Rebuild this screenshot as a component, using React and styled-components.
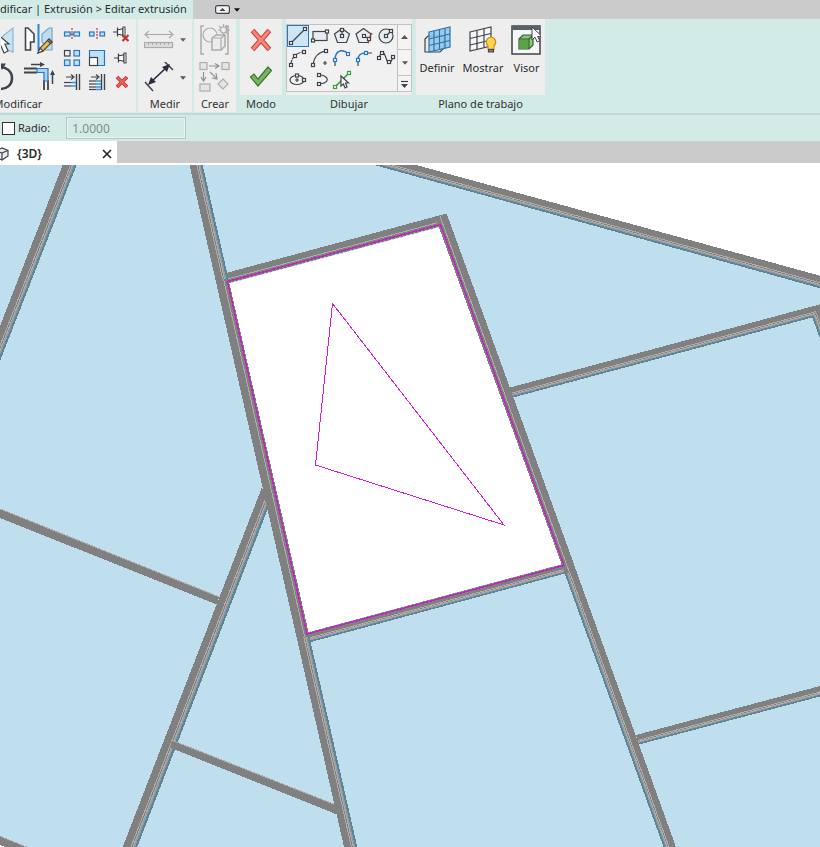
import React, { useState } from 'react';
import styled, { createGlobalStyle } from 'styled-components';

const GlobalStyle = createGlobalStyle`
  * {
    box-sizing: border-box;
  }

  body {
    margin: 0;
    background: #ffffff;
    color: #2b2b2b;
    font-family: 'Noto Sans', 'Open Sans', sans-serif;
    font-size: 11px;
    line-height: 16px;
  }

  button,
  input {
    font: inherit;
    color: inherit;
  }
`;

const Window = styled.div`
  display: flex;
  flex-direction: column;
  height: 100vh;
  min-height: 400px;
  overflow: hidden;
`;

const TitleBar = styled.header`
  display: flex;
  align-items: stretch;
  height: 19px;
  background: #cbcbcb;
`;

const ContextTab = styled.button`
  display: flex;
  align-items: center;
  padding: 0 6px 2px 0;
  border: none;
  background: #d3ebe7;
  white-space: nowrap;
`;

const CollapseButton = styled.button`
  display: flex;
  align-items: center;
  gap: 4px;
  margin-left: 22px;
  padding: 0;
  border: none;
  background: none;
`;

const Ribbon = styled.div`
  display: flex;
  align-items: stretch;
  gap: 2px;
  height: 96px;
  padding-bottom: 1px;
  overflow: hidden;
  background: #d3ebe7;
  border-bottom: 2px solid #c3d8d5;
`;

const Panel = styled.section`
  display: flex;
  flex: none;
  flex-direction: column;
  width: ${props => props.$width}px;
  margin-left: ${props => props.$start || 0}px;
  background: ${props => props.$contextual ? '#d3ebe7' : '#eeeeee'};
`;

const PanelBody = styled.div`
  display: flex;
  flex: 1;
  align-items: flex-start;
  justify-content: ${props => props.$justify || 'center'};
  gap: ${props => props.$gap || 0}px;
  padding-top: 5px;
  background: #eeeeee;
`;

const PanelTitle = styled.div`
  height: 17px;
  line-height: 18px;
  text-align: center;
  color: #333333;
`;

const ToolColumn = styled.div`
  display: flex;
  flex-direction: column;
  gap: 6px;
`;

const SmallTools = styled.div`
  display: grid;
  grid-template-columns: repeat(3, 25px);
  grid-auto-rows: 24px;
  justify-items: center;
  margin: -2px 2px 0 0;
`;

const ToolButton = styled.button`
  display: flex;
  align-items: center;
  justify-content: center;
  gap: 6px;
  height: ${props => props.$height || 32}px;
  padding: 0;
  border: none;
  background: none;

  svg {
    display: block;
    flex: none;
  }

  &:disabled {
    opacity: 0.9;
  }
`;

const LabelledTool = styled.button`
  display: flex;
  flex-direction: column;
  align-items: center;
  gap: 4px;
  padding: 0;
  border: none;
  background: none;
`;

const Gallery = styled.div`
  display: flex;
  border: 1px solid #c2c2c2;
  background: #f1f1f1;
`;

const GalleryGrid = styled.div`
  display: grid;
  grid-template-columns: repeat(5, 22px);
  grid-auto-rows: 22px;
`;

const GalleryItem = styled.button`
  display: flex;
  align-items: center;
  justify-content: center;
  padding: 0;
  border: 1px solid ${props => props.$active ? '#2a78c2' : 'transparent'};
  background: ${props => props.$active ? '#cde6f7' : 'none'};
`;

const GalleryScroll = styled.div`
  display: grid;
  grid-template-rows: 25px 26px 15px;
  width: 14px;
  border-left: 1px solid #c2c2c2;
`;

const ScrollButton = styled.button`
  display: flex;
  align-items: center;
  justify-content: center;
  padding: 0;
  border: none;
  border-bottom: 1px solid #c2c2c2;
  background: #f4f4f4;

  &:last-child {
    border-bottom: none;
  }
`;

const OptionsBar = styled.div`
  display: flex;
  align-items: center;
  height: 26px;
  padding: 0 2px;
  background: #d3ebe7;
`;

const OptionLabel = styled.label`
  display: flex;
  align-items: center;
  gap: 3px;
`;

const CheckBox = styled.input`
  appearance: none;
  width: 13px;
  height: 13px;
  margin: 0;
  border: 1px solid #333333;
  background: #ffffff;

  &:checked {
    background: #2a78c2;
  }
`;

const RadiusInput = styled.input`
  width: 120px;
  height: 22px;
  margin-left: 16px;
  padding: 0 4px;
  border: 2px solid #e8f2f1;
  outline: 1px solid #b5c6c4;
  outline-offset: -1px;
  background: #d3ebe7;
  color: #838b8a;
  font-size: 12px;
`;

const ViewTabs = styled.nav`
  display: flex;
  height: 22px;
  background: #cbcbcb;
`;

const ViewTab = styled.div`
  display: flex;
  align-items: center;
  justify-content: space-between;
  width: 117px;
  padding: 3px 5px 0 0;
  background: #ffffff;
`;

const ViewName = styled.button`
  display: flex;
  align-items: center;
  gap: 7px;
  padding: 0;
  border: none;
  background: none;
  font-size: 12px;
  font-weight: 600;
`;

const CloseButton = styled.button`
  display: flex;
  padding: 0;
  border: none;
  background: none;
`;

const Viewport = styled.main`
  display: flex;
  flex: 1;
  min-height: 0;
  padding-top: 2px;
  background: #ffffff;

  svg {
    display: block;
    width: 100%;
    height: 100%;
  }
`;

const INK = '#3f434b';
const BLUE = '#2877be';
const SKY = '#bfe0f5';

const Icon = ({ w = 20, h = w, children }) => (
  <svg width={w} height={h} viewBox={`0 0 ${w} ${h}`} fill="none" stroke={INK} strokeWidth="1.2" aria-hidden="true">
    {children}
  </svg>
);

// little square grips drawn on the ends of the sketch tools
const Grips = ({ at, color = INK }) => at.map(([x, y]) => (
  <rect key={`${x}-${y}`} x={x - 1.5} y={y - 1.5} width="3" height="3" fill="#fff" stroke={color} />
));

const Caret = ({ up, color = '#555' }) => (
  <svg width={up ? 7 : 6} height="4" viewBox="0 0 7 4" aria-hidden="true">
    <path d={up ? 'M0 4L3.5 0L7 4Z' : 'M0 0L3.5 4L7 0Z'} fill={color} />
  </svg>
);

const PointerShape = ({ x, y }) => (
  <path
    transform={`translate(${x} ${y})`}
    d="M0 0V13L3 10.2L5.2 15L7.8 13.8L5.6 9.4H10Z"
    fill="#fff"
    stroke="#3f434b"
    strokeWidth="1"
  />
);

const SelectIcon = () => (
  <Icon w={20} h={32}>
    <path d="M2 12L12 4V28L2 24Z" fill="#c9e4f4" stroke="#8fb6d0" />
    <path d="M-4 10V24L0 22L3 29L7 27L4 20H8Z" fill="#fff" />
  </Icon>
);

const RotateIcon = () => (
  <Icon w={20} h={32}>
    <path d="M-1 5C5 5 11 9 11 16C11 23 6 27 -1 27" strokeWidth="2.600" />
    <path d="M-2 1.500H5L1 8Z" fill={INK} stroke="none" />
  </Icon>
);

const MirrorIcon = () => (
  <Icon w={32} h={32}>
    <path d="M1.500 4H4L10 10V18H6.500V26H1.500Z" fill="#fff" strokeWidth="1.600" />
    <path d="M28 4H25L18 10V18L21 21V26H28Z" fill="#bcdcf0" stroke="#79a6c8" />
    <path d="M14.500 0V27" stroke="#2c86d6" strokeWidth="2" />
    <path d="M14 29L16 24L25 15L28 18L19 27Z" fill="#f2bd4a" stroke="#5b4a36" />
    <path d="M25 15L28 18L26.500 19.500L23.500 16.500Z" fill="#e77c74" />
    <path d="M14 29L16 24L19 27Z" fill="#fff" />
  </Icon>
);

const CornerIcon = () => (
  <Icon w={32} h={32}>
    <path d="M7 2.500H18" strokeWidth="1.5" />
    <path d="M16 0L21 2.500L16 5Z" fill={INK} stroke="none" />
    <path d="M0 6.500H13M0 10.500H13M20 18V28M24 18V28" strokeWidth="1.8" />
    <path d="M13 6.500H24V19H20V10.500H13Z" fill="#a8d4f3" stroke={BLUE} />
    <path d="M28.500 22V11" strokeWidth="1.5" />
    <path d="M26 13L28.500 8L31 13Z" fill={INK} stroke="none" />
  </Icon>
);

const SplitIcon = () => (
  <Icon w={18} h={18}>
    <rect x="1.500" y="7" width="5.500" height="4" fill={SKY} stroke={BLUE} />
    <rect x="11" y="7" width="5.500" height="4" fill={SKY} stroke={BLUE} />
    <path d="M7 9H11" stroke={BLUE} />
    <path d="M9 3V15" stroke="#c03b36" strokeDasharray="2 1" />
  </Icon>
);

const SplitGapIcon = () => (
  <Icon w={18} h={18}>
    <rect x="1.500" y="7" width="4.500" height="4" fill={SKY} stroke={BLUE} />
    <rect x="12" y="7" width="4.500" height="4" fill={SKY} stroke={BLUE} />
    <path d="M9 3V15" stroke="#c03b36" strokeDasharray="2 1" />
  </Icon>
);

const PinPath = () => (
  <g>
    <path d="M1 9H5M5.500 4.500V13.500" />
    <path d="M5.500 6.500H8L11 5.500V12.500L8 11.500H5.500Z" fill="#f7f7f7" />
    <rect x="11" y="4" width="2" height="10" fill="#fff" strokeWidth="1" />
  </g>
);

const UnpinIcon = () => (
  <Icon w={18} h={18}>
    <g transform="translate(-1 -2)"><PinPath /></g>
    <path d="M9.500 10L15.500 16M15.500 10L9.500 16" stroke="#c0342f" strokeWidth="2.2" />
  </Icon>
);

const PinIcon = () => (
  <Icon w={18} h={18}>
    <PinPath />
  </Icon>
);

const ArrayIcon = () => (
  <Icon w={18} h={18}>
    <rect x="1.500" y="1.500" width="5.500" height="5.500" fill="#e6f1f8" />
    <rect x="11" y="1.500" width="5.500" height="5.500" fill={SKY} stroke={BLUE} />
    <rect x="1.500" y="11" width="5.500" height="5.500" fill={SKY} stroke={BLUE} />
    <rect x="11" y="11" width="5.500" height="5.500" fill={SKY} stroke={BLUE} />
  </Icon>
);

const ScaleIcon = () => (
  <Icon w={18} h={18}>
    <path d="M1.500 8V1.500H16.500V16.500H10" fill={SKY} stroke={BLUE} />
    <rect x="1.500" y="8.500" width="8" height="8" fill="#fff" />
  </Icon>
);

const TrimIcon = ({ multiple }) => (
  <Icon w={18} h={18}>
    <path d="M3 4H10M8 1.500L11 4L8 6.500" />
    <path d="M13.500 1V17M16.500 1V17" strokeWidth="1.4" />
    {(multiple ? [8, 11, 14, 16.5] : [9.5, 13]).map(y => (
      <g key={y}>
        <path d={`M1 ${y}H8`} />
        <path d={`M8 ${y}H13`} stroke="#3c93dc" strokeWidth="1.500" />
      </g>
    ))}
  </Icon>
);

const DeleteIcon = () => (
  <Icon w={18} h={18}>
    <path d="M4 4L14 14M14 4L4 14" stroke="#bf302d" strokeWidth="3.600" />
    <path d="M4.500 4.500L13.500 13.500M13.500 4.500L4.500 13.500" stroke="#f0605a" strokeWidth="2" />
  </Icon>
);

const MeasureIcon = () => (
  <Icon w={30} h={32}>
    <g stroke="#a3a3a3">
      <path d="M2 10.500H28M5 7L1 10.500L5 14M25 7L29 10.500L25 14" />
      <rect x="0.500" y="18.500" width="28" height="5" fill="#ddd" />
      <path d="M4.500 18V21M8.500 18V21M12.500 18V21M16.500 18V21M20.500 18V21M24.500 18V21" />
    </g>
  </Icon>
);

const DimensionIcon = () => (
  <Icon w={30} h={32}>
    <path d="M6 21L24 4" stroke="#2b2d3e" strokeWidth="1.600" />
    <path d="M1 20L9 29M20 -1L29 8" strokeWidth="1.500" />
    <path d="M4 23L7 15L12 20ZM26 2L18 5L23 10Z" fill="#2b2d3e" stroke="none" />
  </Icon>
);

const ComponentIcon = () => (
  <Icon w={32} h={32}>
    <g stroke="#a5a5a5">
      <path d="M5 2H2V30H5M26 2H29V30H26" strokeWidth="1.500" />
      <circle cx="11" cy="11" r="7" fill="#eee" />
      <path d="M13 14L17 11H26V22L22 26H13Z" fill="#ececec" strokeWidth="1.500" />
      <path d="M13 14H22V26M22 14L26 11" />
      <circle cx="24.500" cy="6" r="3" fill="#eee" />
      <path d="M24.500 0V3M24.500 9V12M19 6H21M28 6H31M20 2L22 4M29 2L27 4M29 10L27 8" />
    </g>
  </Icon>
);

const GroupIcon = () => (
  <Icon w={32} h={32}>
    <g stroke="#a5a5a5" fill="#e5e5e5" transform="translate(0 -1)">
      <rect x="1" y="1.500" width="7" height="7" />
      <rect x="23" y="1.500" width="7" height="7" />
      <rect x="1" y="23" width="10" height="7" />
      <path d="M24 18L29 23L24 28L19 23Z" />
      <path d="M10 5H20M16 2.500L20 5L16 7.500M4.500 11V20M2 16L4.500 20L7 16M11 11L18 18M13 17L18 18L17 12" stroke="#8b8b8b" fill="none" />
    </g>
  </Icon>
);

const CancelIcon = () => (
  <Icon w={24} h={32}>
    <path d="M3.500 6.500L20.500 25.500M20.500 6.500L3.500 25.500" stroke="#c6413c" strokeWidth="5" />
    <path d="M4 7L20 25M20 7L4 25" stroke="#f8857d" strokeWidth="3" />
  </Icon>
);

const FinishIcon = () => (
  <Icon w={24} h={32}>
    <path d="M1.500 15L5 12L9 17L19 5L22.500 8.500L9 24Z" fill="#79b55e" stroke="#3f7532" />
  </Icon>
);

const drawTools = [
  { name: 'Línea', art: <><path d="M3 17L17 3" /><Grips at={[[3, 17], [17, 3]]} /></> },
  { name: 'Rectángulo', art: <><rect x="3" y="5.500" width="14" height="9" fill="#e9ecf2" /><Grips at={[[3, 14.5], [17, 5.5]]} /></> },
  { name: 'Polígono inscrito', art: <><path d="M10 2.500L17.500 8L14.500 16.500H5.500L2.500 8Z" fill="#e9ecf2" /><path d="M10 4V9" /><Grips at={[[10, 4], [10, 10]]} /></> },
  { name: 'Polígono circunscrito', art: <><path d="M9.500 2.500L17 8L14 16.500H5L2 8Z" fill="#e9ecf2" /><path d="M10 10L15 13" /><path d="M18 7L14 18" stroke="#d02a2a" strokeDasharray="2 1" /><Grips at={[[10, 10], [15, 13]]} /></> },
  { name: 'Círculo', art: <><circle cx="10" cy="10" r="7" fill="#e9ecf2" /><path d="M10 10L15 5" /><Grips at={[[10, 10], [15, 5]]} /></> },
  { name: 'Arco inicio-fin-radio', art: <><path d="M3 17C3 10 8 4 17 4" strokeDasharray="5 1" /><Grips at={[[3, 17], [7, 8], [16, 4]]} /></> },
  { name: 'Arco centro-extremos', art: <><path d="M3 17C4 9 9 4 16 3" /><path d="M13 15H17M15 13V17" /><Grips at={[[3, 17], [16, 3]]} /></> },
  { name: 'Arco tangente', art: <><path d="M3 12C3 1 12 1 16 6" stroke={BLUE} strokeWidth="1.600" /><path d="M3 14V18" /><Grips at={[[3, 12], [16, 6]]} color={BLUE} /></> },
  { name: 'Arco de empalme', art: <><path d="M4 12C4 7 6 5 12 5" stroke={BLUE} strokeWidth="1.600" /><path d="M4 14V18M14 5H18" /><Grips at={[[4, 12], [12, 5]]} color={BLUE} /></> },
  { name: 'Spline', art: <><path d="M3 10C6 1 8 4 10 10S14 18 17 9" /><Grips at={[[3, 10], [6, 5], [13, 14], [17, 9]]} /></> },
  { name: 'Elipse', art: <><ellipse cx="9" cy="10" rx="7" ry="4.500" fill="#f2f2f2" /><path d="M7 10H11M9 8V12" /><Grips at={[[9, 5.5], [16, 10]]} /></> },
  { name: 'Semielipse', art: <><path d="M9 5C20 5 20 14 9 14" /><Grips at={[[9, 5], [9, 14]]} /></> },
  { name: 'Seleccionar líneas', art: <><path d="M3 17L17 3" stroke="#35a02c" strokeWidth="1.600" /><Grips at={[[3, 17], [17, 3]]} color="#35a02c" /><path d="M9 6V16L11.500 14L13 18L15 17L13.500 13H16.500Z" fill="#fff" /></> },
];

const DefineIcon = () => (
  <Icon w={30} h={32}>
    <path d="M3 15L6 12H22V24L18 28H3Z" fill="#e8edf3" />
    <path d="M7 8L28 3V23L7 28Z" fill="#8cc5ee" fillOpacity="0.85" stroke="#2b73a8" />
    <path d="M12 7V27M17.500 5.500V25.500M23 4.500V24.500M7 15L28 10M7 21.500L28 16.500" stroke="#2b73a8" />
  </Icon>
);

const ShowIcon = () => (
  <Icon w={30} h={32}>
    <path d="M2 8L23 3V22L2 27Z" fill="#f7f7f7" />
    <path d="M9 6.500V25M16 4.500V23.500M2 14.500L23 9.500M2 21L23 16" />
    <path d="M23 13A5.200 5.200 0 0 1 26 22V25H20V22A5.200 5.200 0 0 1 23 13Z" fill="#ffd54a" stroke="#c79222" />
    <path d="M20.500 25.500H25.500V28H20.500Z" fill="#7d8797" />
  </Icon>
);

const ViewerIcon = () => (
  <Icon w={30} h={32}>
    <rect x="1" y="2" width="28" height="28" fill="#f7f7f7" strokeWidth="1.500" />
    <rect x="1" y="2" width="28" height="4" fill="#596069" stroke="none" />
    <path d="M8 15L12 11H22V21L18 25H8Z" fill="#8cc67b" stroke="#335f2c" />
    <path d="M8.500 15.500H17.500V24.500H8.500Z" fill="#5ba34b" stroke="none" />
    <path d="M8 15H18V25M18 15L22 11" stroke="#335f2c" />
    <PointerShape x={21} y={3} />
  </Icon>
);

const CubeIcon = () => (
  <Icon w={10} h={14}>
    <path d="M-5 4L2 1L8 3.500V9L2 13L-5 10Z" fill="#e8eaee" />
    <path d="M8 3.500L2 6V13M2 6L-5 4" />
  </Icon>
);

// Every wall is the strip between its plain edge and its shaded edge,
// both given as [x1, y1, x2, y2].
const walls = [
  { outer: [62.7, 165, 0, 326], inner: [76.7, 165, 0, 361], kind: 'deep' },
  { outer: [376, 154, 820, 275.7], inner: [376, 165.5, 820, 288.3], kind: 'deep' },
  { outer: [510, 387.5, 820, 304.3], inner: [513, 397.5, 812, 317.5], kind: 'deep' },
  { outer: [820, 304, 834, 344], inner: [812, 317, 828, 360], kind: 'deep' },
  { outer: [636, 735, 820, 686], inner: [639, 744.5, 820, 696.5], kind: 'deep' },
  { outer: [0, 518, 217, 604.5], inner: [0, 508.5, 219, 596.5], kind: 'thin' },
  { outer: [0, 845, 40, 861], inner: [0, 836, 40, 852], kind: 'thin' },
  { outer: [261.7, 488, 122.7, 847], inner: [272, 498, 137.3, 847], kind: 'deep' },
  { outer: [170, 747.5, 337, 814.5], inner: [172, 740, 337, 805], kind: 'thin' },
  { outer: [306, 633, 565, 563.5], inner: [309, 642.5, 567, 573], kind: 'deep' },
  { outer: [226, 273, 446.5, 213.5], inner: [227, 283.5, 440, 226.5], kind: 'open' },
  { outer: [446.7, 213.5, 577.5, 574], inner: [435.2, 217, 565, 574], kind: 'open' },
  { outer: [577, 573, 676, 847], inner: [564.5, 573, 663.5, 847], kind: 'deep' },
  { outer: [189.5, 165, 215.3, 279], inner: [202.7, 165, 228.5, 279], kind: 'deep' },
  { outer: [215.3, 279, 296.5, 637], inner: [229, 279, 310, 637], kind: 'open' },
  { outer: [296.5, 637, 344, 847], inner: [309.5, 637, 357.3, 847], kind: 'deep' },
];

const profiles = {
  deep: { shade: [[0.68, 0.84, '#8f9ba1'], [0.84, 1, '#5e8597']], lines: [0.56, 0.7] },
  thin: { shade: [], lines: [0.96] },
  open: { shade: [], lines: [0.6] },
};

const edgeAt = ({ outer, inner }, t) => outer.map((v, i) => v + (inner[i] - v) * t);

const strip = (wall, from, to) => {
  const a = edgeAt(wall, from);
  const b = edgeAt(wall, to);
  return `${a[0]},${a[1]} ${a[2]},${a[3]} ${b[2]},${b[3]} ${b[0]},${b[1]}`;
};

const Wall = ({ wall }) => {
  const { shade, lines } = profiles[wall.kind];
  return (
    <g>
      <polygon points={strip(wall, 0, 1)} fill="#808080" />
      {shade.map(([from, to, color]) => (
        <polygon key={from} points={strip(wall, from, to)} fill={color} />
      ))}
      {lines.map(t => {
        const [x1, y1, x2, y2] = edgeAt(wall, t);
        return <line key={t} x1={x1} y1={y1} x2={x2} y2={y2} stroke="#aeaba8" />;
      })}
    </g>
  );
};

const FloorPlan = () => (
  <svg viewBox="0 165 820 682" preserveAspectRatio="xMinYMin slice" shapeRendering="crispEdges" role="img" aria-label="Vista 3D">
    <rect x="0" y="165" width="820" height="682" fill="#bfdfee" />
    <polygon points="376,159 820,281 820,159" fill="#fff" />
    <polygon points="0,845 0,847 5,847" fill="#fff" />
    {walls.map(wall => (
      <Wall key={wall.outer.join()} wall={wall} />
    ))}
    <polygon points="229.5,283.5 439,227.5 561.5,564 308.5,632" fill="#fff" />
    <g fill="none" stroke="#c224c2">
      <polygon points="227.5,281.5 440.5,224.5 564,565.5 307,634" strokeWidth="1.400" />
      <polygon points="332.5,303.5 504,525 315.5,465" stroke="#cf22cf" />
    </g>
  </svg>
);

const App = () => {
  const [activeTool, setActiveTool] = useState('Línea');
  const [useRadius, setUseRadius] = useState(false);

  return (
    <Window>
      <GlobalStyle />
      <TitleBar>
        <ContextTab>dificar | Extrusión &gt; Editar extrusión</ContextTab>
        <CollapseButton aria-label="Minimizar cinta">
          <Icon w={15} h={9}>
            <rect x="0.600" y="0.600" width="13.800" height="7.800" rx="2" fill="#f2f2f2" />
            <path d="M4.500 6L7.500 3L10.500 6Z" fill={INK} stroke="none" />
          </Icon>
          <Caret color="#111" />
        </CollapseButton>
      </TitleBar>

      <Ribbon>
        <Panel $width={236} $start={-100}>
          <PanelBody $justify="flex-end" $gap={3}>
            <ToolColumn>
              <ToolButton aria-label="Modificar"><SelectIcon /></ToolButton>
              <ToolButton aria-label="Rotar"><RotateIcon /></ToolButton>
            </ToolColumn>
            <ToolColumn>
              <ToolButton aria-label="Simetría"><MirrorIcon /></ToolButton>
              <ToolButton aria-label="Recortar esquina"><CornerIcon /></ToolButton>
            </ToolColumn>
            <SmallTools>
              <ToolButton $height={24} aria-label="Dividir"><SplitIcon /></ToolButton>
              <ToolButton $height={24} aria-label="Dividir con separación"><SplitGapIcon /></ToolButton>
              <ToolButton $height={24} aria-label="Desbloquear"><UnpinIcon /></ToolButton>
              <ToolButton $height={24} aria-label="Matriz"><ArrayIcon /></ToolButton>
              <ToolButton $height={24} aria-label="Escala"><ScaleIcon /></ToolButton>
              <ToolButton $height={24} aria-label="Bloquear"><PinIcon /></ToolButton>
              <ToolButton $height={24} aria-label="Alargar elemento"><TrimIcon /></ToolButton>
              <ToolButton $height={24} aria-label="Alargar varios"><TrimIcon multiple /></ToolButton>
              <ToolButton $height={24} aria-label="Suprimir"><DeleteIcon /></ToolButton>
            </SmallTools>
          </PanelBody>
          <PanelTitle>Modificar</PanelTitle>
        </Panel>

        <Panel $width={54}>
          <PanelBody>
            <ToolColumn>
              <ToolButton disabled aria-label="Medir"><MeasureIcon /><Caret /></ToolButton>
              <ToolButton aria-label="Cota"><DimensionIcon /><Caret /></ToolButton>
            </ToolColumn>
          </PanelBody>
          <PanelTitle>Medir</PanelTitle>
        </Panel>

        <Panel $width={42}>
          <PanelBody>
            <ToolColumn>
              <ToolButton disabled aria-label="Crear componente"><ComponentIcon /></ToolButton>
              <ToolButton disabled aria-label="Crear grupo"><GroupIcon /></ToolButton>
            </ToolColumn>
          </PanelBody>
          <PanelTitle>Crear</PanelTitle>
        </Panel>

        <Panel $width={42} $start={2} $contextual>
          <PanelBody>
            <ToolColumn>
              <ToolButton aria-label="Cancelar"><CancelIcon /></ToolButton>
              <ToolButton aria-label="Finalizar"><FinishIcon /></ToolButton>
            </ToolColumn>
          </PanelBody>
          <PanelTitle>Modo</PanelTitle>
        </Panel>

        <Panel $width={126} $start={2} $contextual>
          <PanelBody>
            <Gallery>
              <GalleryGrid>
                {drawTools.map(tool => (
                  <GalleryItem
                    key={tool.name}
                    aria-label={tool.name}
                    $active={tool.name === activeTool}
                    onClick={() => setActiveTool(tool.name)}
                  >
                    <Icon>{tool.art}</Icon>
                  </GalleryItem>
                ))}
              </GalleryGrid>
              <GalleryScroll>
                <ScrollButton aria-label="Subir"><Caret up /></ScrollButton>
                <ScrollButton aria-label="Bajar"><Caret /></ScrollButton>
                <ScrollButton aria-label="Más">
                  <Icon w={7} h={8}>
                    <path d="M0 1.500H7" />
                    <path d="M0 4L3.500 8L7 4Z" fill={INK} stroke="none" />
                  </Icon>
                </ScrollButton>
              </GalleryScroll>
            </Gallery>
          </PanelBody>
          <PanelTitle>Dibujar</PanelTitle>
        </Panel>

        <Panel $width={129} $start={2} $contextual>
          <PanelBody $gap={8}>
            <LabelledTool><DefineIcon />Definir</LabelledTool>
            <LabelledTool><ShowIcon />Mostrar</LabelledTool>
            <LabelledTool><ViewerIcon />Visor</LabelledTool>
          </PanelBody>
          <PanelTitle>Plano de trabajo</PanelTitle>
        </Panel>
      </Ribbon>

      <OptionsBar>
        <OptionLabel>
          <CheckBox type="checkbox" checked={useRadius} onChange={e => setUseRadius(e.target.checked)} />
          Radio:
        </OptionLabel>
        <RadiusInput aria-label="Radio" defaultValue="1.0000" disabled={!useRadius} />
      </OptionsBar>

      <ViewTabs>
        <ViewTab>
          <ViewName><CubeIcon />{'{3D}'}</ViewName>
          <CloseButton aria-label="Cerrar vista">
            <Icon w={10} h={10}>
              <path d="M1 1L9 9M9 1L1 9" stroke="#222" strokeWidth="1.600" />
            </Icon>
          </CloseButton>
        </ViewTab>
      </ViewTabs>

      <Viewport>
        <FloorPlan />
      </Viewport>
    </Window>
  );
};

export default App;
